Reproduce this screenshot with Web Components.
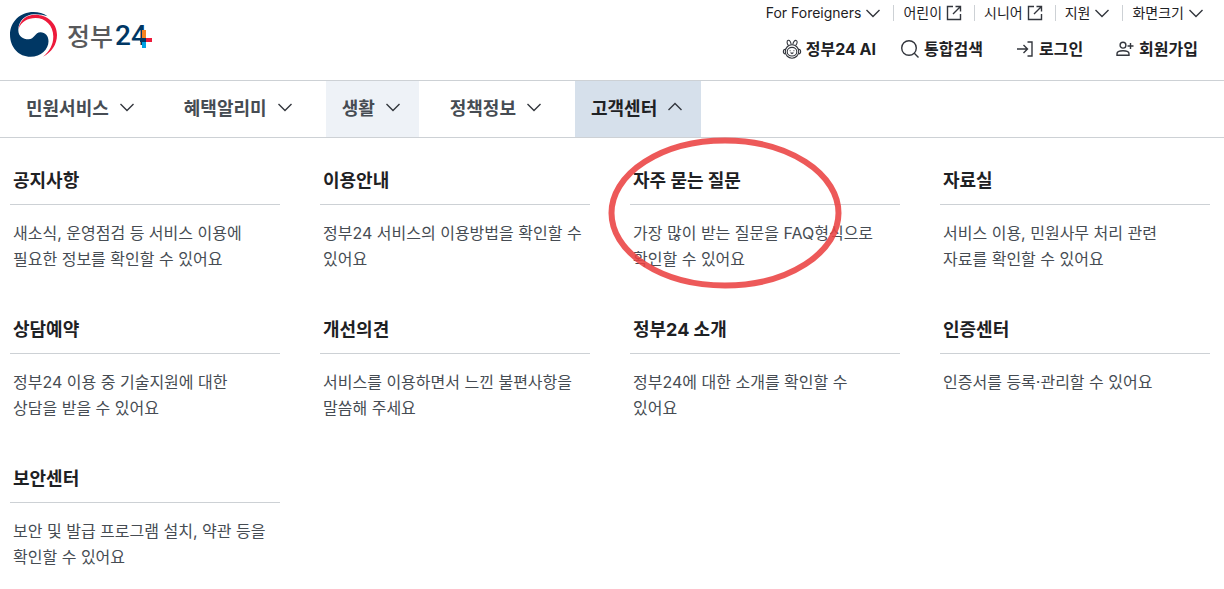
<!DOCTYPE html>
<html lang="ko">
<head>
<meta charset="utf-8">
<title>정부24</title>
<style>
  body {
    margin: 0;
    background: #fff;
    color: #1e2124;
    font-family: Inter, "Noto Sans CJK KR", sans-serif;
  }
</style>
</head>
<body>
  <gov-header></gov-header>
  <gov-nav>
    <nav-item>민원서비스</nav-item>
    <nav-item>혜택알리미</nav-item>
    <nav-item hovered>생활</nav-item>
    <nav-item>정책정보</nav-item>
    <nav-item opened>고객센터</nav-item>
  </gov-nav>
  <mega-menu>
    <menu-card><span slot="title">공지사항</span>새소식, 운영점검 등 서비스 이용에 필요한 정보를 확인할 수 있어요</menu-card>
    <menu-card><span slot="title">이용안내</span>정부24 서비스의 이용방법을 확인할 수 있어요</menu-card>
    <menu-card marked><span slot="title">자주 묻는 질문</span>가장 많이 받는 질문을 FAQ형식으로 확인할 수 있어요</menu-card>
    <menu-card><span slot="title">자료실</span>서비스 이용, 민원사무 처리 관련 자료를 확인할 수 있어요</menu-card>
    <menu-card><span slot="title">상담예약</span>정부24 이용 중 기술지원에 대한 상담을 받을 수 있어요</menu-card>
    <menu-card><span slot="title">개선의견</span>서비스를 이용하면서 느낀 불편사항을 말씀해 주세요</menu-card>
    <menu-card><span slot="title">정부24 소개</span>정부24에 대한 소개를 확인할 수 있어요</menu-card>
    <menu-card><span slot="title">인증센터</span>인증서를 등록·관리할 수 있어요</menu-card>
    <menu-card><span slot="title">보안센터</span>보안 및 발급 프로그램 설치, 약관 등을 확인할 수 있어요</menu-card>
  </mega-menu>

<script>
const ICONS = {
  down: '<path d="M1.5 5 8 11.5 14.5 5"/>',
  up: '<path d="M1.5 11 8 4.5 14.5 11"/>',
  external: '<path d="M7 1.5H1.5v13h13V9M9.5 1.5h5v5M14.5 1.5 7 9"/>',
  search: '<circle cx="9" cy="9" r="7.3"/><path d="m14.3 14.3 4.2 4.2"/>',
  login: '<path d="M2 10h10M8.5 6l4 4-4 4M12.5 3H17v14h-4.5"/>',
  join: '<circle cx="8" cy="6.2" r="2.9"/><path d="M2 16.2v-1.4c0-2 2.4-3 6-3s6 1 6 3v1.4zM15.5 4v6M12.500 7h6"/>',
  rabbit: '<circle cx="10" cy="12.5" r="6.7"/><ellipse cx="10" cy="12.7" rx="4.800" ry="4.300"/><path d="M6.500 6.600C4.600 4.200 4.700 1.600 6.200 1.300c1.600-.3 2.700 2 3 4.300M10.800 5.600c.4-2.400 1.900-4.600 3.400-4.100 1.500.5 1.200 3-.7 5.200M3.300 10.200c-2.600.2-2.600 4.600 0 4.800M16.700 10.200c2.600.2 2.600 4.600 0 4.800M7.600 11.700h1M11.400 11.700h1M8.600 13.500l1.400 1.100 1.400-1.100"/>'
};

class GovIcon extends HTMLElement {
  constructor() {
    super();
    this.attachShadow({ mode: 'open' });
  }

  connectedCallback() {
    const name = this.getAttribute('name');
    const size = Number(this.getAttribute('size') || 16);
    this.shadowRoot.innerHTML = `
      <style>
        :host {
          display: block;
          flex: none;
        }

        svg {
          display: block;
          fill: none;
          stroke: #33363d;
          stroke-width: ${name === 'rabbit' ? 1.1 : 1.4};
        }
      </style>
      <svg width="${size}" height="${size}" viewBox="0 0 ${size} ${size}" aria-hidden="true">${ICONS[name]}</svg>
    `;
  }
}

customElements.define('gov-icon', GovIcon);

class GovLogo extends HTMLElement {
  constructor() {
    super();
    this.attachShadow({ mode: 'open' });
    this.shadowRoot.innerHTML = `
      <style>
        :host {
          display: block;
        }

        a {
          display: flex;
          align-items: center;
          gap: 9px;
          text-decoration: none;
        }

        svg {
          display: block;
        }

        .name {
          position: relative;
          display: flex;
          align-items: center;
          height: 48px;
          color: #58595b;
          font-size: 25px;
          font-weight: 500;
        }

        b {
          margin-left: 2px;
          color: #003764;
          font-family: Roboto, sans-serif;
          font-size: 28px;
          font-weight: 500;
        }

        .cross {
          position: absolute;
          right: -5px;
          top: 19px;
        }
      </style>
      <a href="#">
        <svg width="48" height="46" viewBox="0 0 48 46" aria-hidden="true">
          <path fill="#003764" d="M37.5 4.2C33.5 1.3 28.5 0 23.5 0 10 0 0 10 0 22.5 0 35.5 9 44.8 20.5 44.8c10.500 0 18-7.500 18-15.500 0-5.300-3.300-9-8-9-5.500 0-6 7-12 7-5.500 0-10.200-2.800-10.200-9.300C8.300 8 16 2.500 24 2.200c5-.2 9.500.6 13.500 2z"/>
          <path fill="#ed1a3b" d="M8.500 17C10 8 16.500 2.800 25 2.800c12.500 0 22 8.500 22 20.200 0 9.500-5.500 17.500-14 21.700 6.500-5.200 10.300-12 10.300-20.200C43.300 13.500 35.500 6 25.500 6 17.500 6 11.500 9.500 8.500 17z"/>
        </svg>
        <span class="name">정부<b>24</b>
          <svg class="cross" width="12" height="18" viewBox="0 0 12 18" aria-hidden="true">
            <path fill="#f58220" d="M2 0h4v8H2z"/>
            <path fill="#003764" d="M0 8h6v4H0z"/>
            <path fill="#ed1a3b" d="M6 8h6v4H6z"/>
            <path fill="#00a0e3" d="M2 12h4v6H2z"/>
          </svg>
        </span>
      </a>
    `;
  }
}

customElements.define('gov-logo', GovLogo);

class GovHeader extends HTMLElement {
  constructor() {
    super();
    this.attachShadow({ mode: 'open' });
    this.shadowRoot.innerHTML = `
      <style>
        :host {
          display: flex;
          justify-content: space-between;
          align-items: flex-start;
          height: 80px;
        }

        gov-logo {
          margin: 11px 0 0 10px;
        }

        .util,
        .member {
          display: flex;
          justify-content: flex-end;
          align-items: center;
        }

        .util {
          height: 26px;
          padding-right: 20px;
        }

        .util > * + * {
          margin-left: 12px;
          padding-left: 9px;
          border-left: 1px solid #cdd1d5;
        }

        .member {
          height: 46px;
          gap: 32px;
          padding-right: 26px;
        }

        .find {
          display: flex;
          gap: 24px;
        }

        a,
        button {
          display: flex;
          align-items: center;
          gap: 4px;
          padding: 0;
          border: 0;
          background: none;
          color: inherit;
          font: inherit;
          line-height: 16px;
          text-decoration: none;
          white-space: nowrap;
          cursor: pointer;
        }

        .util a,
        .util button {
          font-size: 14px;
        }

        .member a,
        .member button {
          font-size: 16px;
          font-weight: 700;
          line-height: 20px;
        }
      </style>
      <gov-logo></gov-logo>
      <div>
        <div class="util">
          <button>For Foreigners <gov-icon name="down"></gov-icon></button>
          <a href="#">어린이 <gov-icon name="external"></gov-icon></a>
          <a href="#">시니어 <gov-icon name="external"></gov-icon></a>
          <button>지원 <gov-icon name="down"></gov-icon></button>
          <button>화면크기 <gov-icon name="down"></gov-icon></button>
        </div>
        <div class="member">
          <div class="find">
            <a href="#"><gov-icon name="rabbit" size="20"></gov-icon> 정부24 AI</a>
            <button><gov-icon name="search" size="20"></gov-icon> 통합검색</button>
          </div>
          <a href="#"><gov-icon name="login" size="20"></gov-icon> 로그인</a>
          <a href="#"><gov-icon name="join" size="20"></gov-icon> 회원가입</a>
        </div>
      </div>
    `;
  }
}

customElements.define('gov-header', GovHeader);

class GovNav extends HTMLElement {
  constructor() {
    super();
    this.attachShadow({ mode: 'open' });
    this.shadowRoot.innerHTML = `
      <style>
        :host {
          display: block;
          border-top: 1px solid #cdd1d5;
          border-bottom: 1px solid #cdd1d5;
        }

        nav {
          display: flex;
          gap: 15px;
          padding-left: 10px;
        }
      </style>
      <nav><slot></slot></nav>
    `;
  }
}

customElements.define('gov-nav', GovNav);

class NavItem extends HTMLElement {
  constructor() {
    super();
    this.attachShadow({ mode: 'open' });
    const opened = this.hasAttribute('opened');
    this.shadowRoot.innerHTML = `
      <style>
        :host {
          display: block;
        }

        button {
          display: flex;
          align-items: center;
          gap: 10px;
          height: 56px;
          padding: 0 18px 4px 16px;
          border: 0;
          background: none;
          color: #464c53;
          font: inherit;
          font-size: 18px;
          font-weight: 700;
          white-space: nowrap;
          cursor: pointer;
        }

        :host([hovered]) button {
          background: #eef2f7;
        }

        :host([opened]) button {
          background: #d6e0eb;
          color: #1e2124;
        }
      </style>
      <button aria-expanded="${opened}"><slot></slot><gov-icon name="${opened ? 'up' : 'down'}"></gov-icon></button>
    `;
  }
}

customElements.define('nav-item', NavItem);

class MegaMenu extends HTMLElement {
  constructor() {
    super();
    this.attachShadow({ mode: 'open' });
    this.shadowRoot.innerHTML = `
      <style>
        :host {
          display: grid;
          grid-template-columns: repeat(4, minmax(0, 1fr));
          gap: 44px 40px;
          padding: 29px 14px 0 10px;
        }
      </style>
      <slot></slot>
    `;
  }
}

customElements.define('mega-menu', MegaMenu);

class MenuCard extends HTMLElement {
  constructor() {
    super();
    this.attachShadow({ mode: 'open' });
    this.shadowRoot.innerHTML = `
      <style>
        :host {
          display: block;
          position: relative;
          word-break: keep-all;
        }

        a {
          display: block;
          padding: 0 6px 9px 3px;
          border-bottom: 1px solid #cdd1d5;
          color: #1e2124;
          font-size: 18px;
          font-weight: 700;
          line-height: 28px;
          text-decoration: none;
        }

        p {
          margin: 15px 0 0;
          padding: 0 6px 0 3px;
          color: #464c53;
          font-size: 16px;
          line-height: 26px;
        }

        svg {
          display: none;
          position: absolute;
          left: -22px;
          top: -30px;
          pointer-events: none;
        }

        :host([marked]) svg {
          display: block;
        }
      </style>
      <a href="#"><slot name="title"></slot></a>
      <p><slot></slot></p>
      <svg width="234" height="152" viewBox="0 0 234 152" aria-hidden="true">
        <ellipse cx="117" cy="76" rx="113.5" ry="72.5" fill="none" stroke="#eb4242" stroke-opacity=".88" stroke-width="6"/>
      </svg>
    `;
  }
}

customElements.define('menu-card', MenuCard);
</script>
</body>
</html>
